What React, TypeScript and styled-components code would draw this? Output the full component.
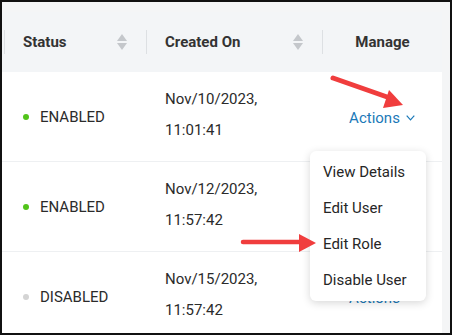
import React from 'react'
import styled, { createGlobalStyle } from 'styled-components'

const GlobalStyle = createGlobalStyle`
  html, body {
    margin: 0;
    padding: 0;
    background: #fff;
  }
  * {
    box-sizing: border-box;
  }
`

const Frame = styled.div`
  width: 452px;
  height: 335px;
  border: 2px solid #111;
  background: #f4f5f6;
  padding: 10px 8px 0 0;
  overflow: hidden;
  font-family: Roboto, 'Liberation Sans', sans-serif;
  color: #2b2b2b;
`

const TableWrap = styled.div`
  position: relative;
  width: 440px;
  height: 100%;
  overflow: hidden;
  background: #fff;
`

const Columns = `
  display: grid;
  grid-template-columns: 2px 142px 176px 120px;
`

const HeaderRow = styled.div`
  ${Columns}
  height: 60px;
  background: #f3f5f7;
`

const HeaderCell = styled.div<{ $center?: boolean }>`
  display: flex;
  align-items: center;
  padding-right: ${({ $center }) => ($center ? '0' : '19px')};
`

const Divider = styled.span`
  width: 1px;
  height: 24px;
  background: #dde0e3;
  flex-shrink: 0;
`

const HeaderLabel = styled.span<{ $center?: boolean }>`
  flex: 1;
  font-size: 15px;
  font-weight: 700;
  color: #333;
  padding-left: ${({ $center }) => ($center ? '0' : '18px')};
  text-align: ${({ $center }) => ($center ? 'center' : 'left')};
`

const Row = styled.div`
  ${Columns}
  height: 90px;
  border-bottom: 1px solid #eef0f2;
`

const Cell = styled.div<{ $center?: boolean }>`
  display: flex;
  align-items: center;
  justify-content: ${({ $center }) => ($center ? 'center' : 'flex-start')};
  padding-left: ${({ $center }) => ($center ? '0' : '19px')};
  font-size: 15px;
`

const Dot = styled.span<{ $on: boolean }>`
  width: 6px;
  height: 6px;
  border-radius: 50%;
  background: ${({ $on }) => ($on ? '#52c41a' : '#d4d4d4')};
  margin-right: 11px;
`

const DateText = styled.div`
  line-height: 31px;
  margin-top: -3px;
`

const ActionsLink = styled.span`
  display: inline-flex;
  align-items: center;
  gap: 6px;
  color: #1b79b8;
  font-size: 15px;
  margin-top: 2px;
`

const Menu = styled.div`
  position: absolute;
  left: 308px;
  top: 139px;
  width: 116px;
  padding: 3px 0;
  background: #fff;
  border-radius: 6px;
  box-shadow: 0 2px 9px rgba(0, 0, 0, 0.16);
`

const MenuItem = styled.div`
  height: 36px;
  display: flex;
  align-items: center;
  padding-left: 13px;
  font-size: 15px;
  color: #262626;
`

const Annotation = styled.svg`
  position: absolute;
  left: 0;
  top: 0;
  pointer-events: none;
`

const SortIcon = () => (
  <svg width="10" height="16" viewBox="0 0 10 16">
    <path d="M5 0 L10 7 L0 7 Z" fill="#c4c7cb" />
    <path d="M0 9 L10 9 L5 16 Z" fill="#c4c7cb" />
  </svg>
)

const Chevron = () => (
  <svg width="9" height="6" viewBox="0 0 9 6">
    <polyline points="0.7,0.7 4.5,4.8 8.3,0.7" fill="none" stroke="#1b79b8" strokeWidth="1.2" />
  </svg>
)

const rows = [
  { on: true, label: 'ENABLED', date: 'Nov/10/2023,', time: '11:01:41' },
  { on: true, label: 'ENABLED', date: 'Nov/12/2023,', time: '11:57:42' },
  { on: false, label: 'DISABLED', date: 'Nov/15/2023,', time: '11:57:42' },
]

const menuItems = ['View Details', 'Edit User', 'Edit Role', 'Disable User']

export default function App() {
  return (
    <>
      <GlobalStyle />
      <Frame>
        <TableWrap>
          <HeaderRow>
            <div />
            <HeaderCell>
              <Divider />
              <HeaderLabel>Status</HeaderLabel>
              <SortIcon />
            </HeaderCell>
            <HeaderCell>
              <Divider />
              <HeaderLabel>Created On</HeaderLabel>
              <SortIcon />
            </HeaderCell>
            <HeaderCell $center>
              <Divider />
              <HeaderLabel $center>Manage</HeaderLabel>
            </HeaderCell>
          </HeaderRow>

          {rows.map((r, i) => (
            <Row key={i}>
              <div />
              <Cell>
                <Dot $on={r.on} />
                {r.label}
              </Cell>
              <Cell>
                <DateText>
                  {r.date}
                  <br />
                  {r.time}
                </DateText>
              </Cell>
              <Cell $center>
                <ActionsLink>
                  Actions
                  <Chevron />
                </ActionsLink>
              </Cell>
            </Row>
          ))}

          <Menu>
            {menuItems.map((m) => (
              <MenuItem key={m}>{m}</MenuItem>
            ))}
          </Menu>

          <Annotation width="440" height="323" viewBox="0 0 440 323">
            <line x1="331" y1="66" x2="388" y2="86" stroke="#f03d3d" strokeWidth="5" strokeLinecap="round" />
            <path d="M401 93 L381 96 L387 78 Z" fill="#f03d3d" />
            <line x1="241" y1="230" x2="300" y2="230" stroke="#f03d3d" strokeWidth="4.5" strokeLinecap="round" />
            <path d="M314 231 L297 222 L297 240 Z" fill="#f03d3d" />
          </Annotation>
        </TableWrap>
      </Frame>
    </>
  )
}
